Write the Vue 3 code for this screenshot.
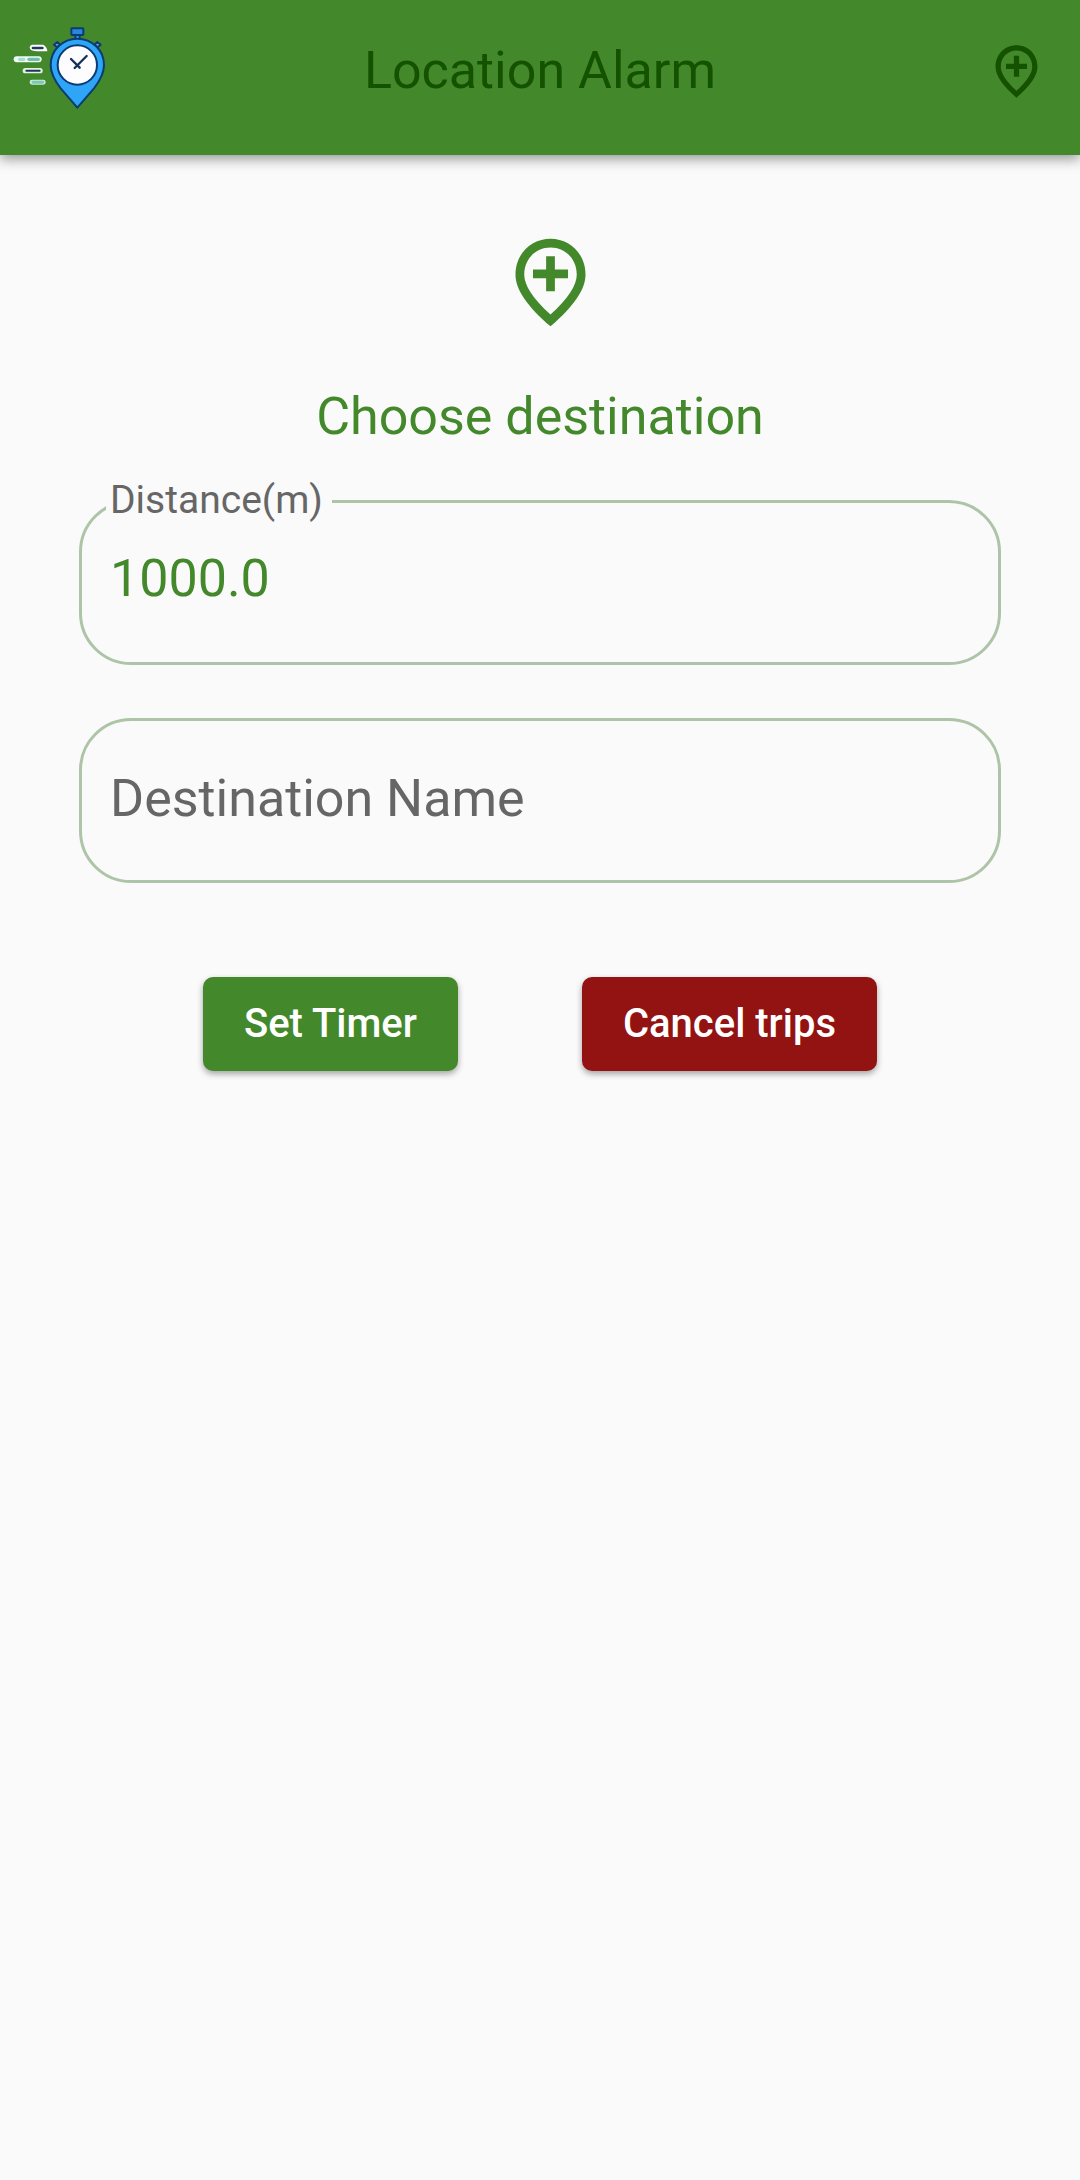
<script setup>
import { ref } from 'vue'

const distance = ref('1000.0')
const destination = ref('')
</script>

<template>
  <div class="screen">
    <header class="app-bar">
      <svg class="logo" viewBox="0 0 390 366" aria-hidden="true">
        <g>
          <path d="M96 104H130Q142 112 142 124H112Q89 122 89 113Q89 105 96 104Z" fill="#fff" />
          <rect x="41" y="139" width="84" height="18" rx="9" fill="#eefaf5" />
          <rect x="68" y="174" width="60" height="16" rx="8" fill="#e3f3e2" />
          <rect x="89" y="209" width="48" height="15" rx="7" fill="#c9eadb" />
          <rect x="95" y="110" width="36" height="8" rx="4" fill="#24385f" />
          <rect x="54" y="143" width="22" height="10" rx="5" fill="#a9dccd" />
          <rect x="82" y="143" width="38" height="10" rx="5" fill="#6cbfa8" />
          <rect x="76" y="179" width="46" height="6" rx="3" fill="#23355a" />
          <rect x="95" y="212" width="37" height="9" rx="4" fill="#7cc8b2" />
        </g>
        <g stroke="#0a3b73" stroke-width="6" stroke-linejoin="round">
          <rect x="226" y="72" width="13" height="16" fill="#2c9cec" />
          <rect x="214" y="55" width="36" height="20" rx="2" fill="#2889d8" />
          <path d="M162 104l10-8 8 8-9 8z" fill="#7fa9c9" />
          <path d="M302 104l-10-8-8 8 9 8z" fill="#7fa9c9" />
          <path
            d="M232 86C188 86 152 121 152 165C152 190 165 213 182 235L232 293L282 235C299 213 312 190 312 165C312 121 276 86 232 86Z"
            fill="#2ea5f7"
          />
          <circle cx="232" cy="165" r="59" fill="#fdfdff" />
          <path d="M213 147L239 173M260 138L224 174" fill="none" stroke="#173057" stroke-width="7" stroke-linecap="round" />
        </g>
      </svg>
      <h1 class="title">Location Alarm</h1>
      <button class="icon-button" type="button" aria-label="Add location">
        <svg class="pin-small" viewBox="0 0 24 24" aria-hidden="true">
          <path
            fill="currentColor"
            fill-rule="evenodd"
            d="M12 2c4.2 0 8 3.22 8 8.2 0 3.32-2.67 7.25-8 11.8-5.33-4.55-8-8.48-8-11.8C4 5.22 7.8 2 12 2zM12 4c-3.35 0-6 2.57-6 6.2 0 2.34 1.95 5.44 6 9.14 4.05-3.7 6-6.79 6-9.14C18 6.57 15.35 4 12 4zM11 6h2v3h3v2h-3v3h-2v-3H8V9h3z"
          />
        </svg>
      </button>
    </header>

    <main class="content">
      <button class="icon-button choose" type="button" aria-label="Choose destination on map">
        <svg class="pin-large" viewBox="0 0 24 24" aria-hidden="true">
          <path
            fill="currentColor"
            fill-rule="evenodd"
            d="M12 2c4.2 0 8 3.22 8 8.2 0 3.32-2.67 7.25-8 11.8-5.33-4.55-8-8.48-8-11.8C4 5.22 7.8 2 12 2zM12 4c-3.35 0-6 2.57-6 6.2 0 2.34 1.95 5.44 6 9.14 4.05-3.7 6-6.79 6-9.14C18 6.57 15.35 4 12 4zM11 6h2v3h3v2h-3v3h-2v-3H8V9h3z"
          />
        </svg>
      </button>
      <h2 class="heading">Choose destination</h2>

      <form class="form" @submit.prevent>
        <div class="field">
          <label class="float-label" for="distance">Distance(m)</label>
          <input id="distance" v-model="distance" class="input filled" type="text" inputmode="decimal" />
        </div>
        <div class="field">
          <input
            id="destination"
            v-model="destination"
            class="input"
            type="text"
            placeholder="Destination Name"
            aria-label="Destination Name"
          />
        </div>
        <div class="actions">
          <button class="action set" type="submit">Set Timer</button>
          <button class="action cancel" type="button">Cancel trips</button>
        </div>
      </form>
    </main>
  </div>
</template>

<style>
body {
  margin: 0;
  background: #fafafa;
}
</style>

<style scoped>
.screen {
  min-height: 100vh;
  background: #fafafa;
  font-family: Roboto, sans-serif;
  color: #43892b;
}

.app-bar {
  display: grid;
  grid-template-columns: 130px 1fr 130px;
  align-items: center;
  padding: 10px 0 23px;
  background: #43892b;
  color: #145200;
  box-shadow: 0 4px 12px rgba(0, 0, 0, 0.4);
}

.logo {
  display: block;
  width: 130px;
  height: 122px;
}

.title {
  margin: 0;
  font-size: 52px;
  font-weight: 400;
  line-height: 60px;
  text-align: center;
}

.icon-button {
  display: block;
  padding: 0;
  border: 0;
  background: none;
  color: inherit;
  cursor: pointer;
}

.app-bar .icon-button {
  justify-self: end;
  margin-right: 32px;
}

.pin-small {
  display: block;
  width: 63px;
  height: 63px;
}

.content {
  display: flex;
  flex-direction: column;
  align-items: center;
  padding: 75px 79px 0;
}

.choose {
  margin-left: 20px;
}

.pin-large {
  display: block;
  width: 105px;
  height: 105px;
}

.heading {
  margin: 52px 0 0;
  font-size: 52px;
  font-weight: 400;
  line-height: 60px;
  text-align: center;
}

.form {
  display: flex;
  flex-direction: column;
  gap: 53px;
  width: 100%;
  margin-top: 53px;
}

.field {
  position: relative;
}

.float-label {
  position: absolute;
  top: -23px;
  left: 27px;
  padding: 0 9px 0 4px;
  background: #fafafa;
  color: #666;
  font-size: 39px;
  line-height: 46px;
}

.input {
  display: block;
  box-sizing: border-box;
  width: 100%;
  height: 165px;
  padding: 0 28px 5px;
  border: 3px solid #adc4a8;
  border-radius: 52px;
  outline: 0;
  background: transparent;
  color: #43892b;
  font: 400 52px Roboto, sans-serif;
}

.input.filled {
  padding-bottom: 9px;
}

.input::placeholder {
  color: #666;
  opacity: 1;
}

.actions {
  display: flex;
  justify-content: space-evenly;
  margin-top: 41px;
}

.action {
  padding: 24px 41px;
  border: 0;
  border-radius: 10px;
  color: #fff;
  font: 500 40px/46px Roboto, sans-serif;
  box-shadow: 0 3px 6px rgba(0, 0, 0, 0.35);
  cursor: pointer;
}

.set {
  background: #43892b;
}

.cancel {
  background: #931313;
}
</style>
